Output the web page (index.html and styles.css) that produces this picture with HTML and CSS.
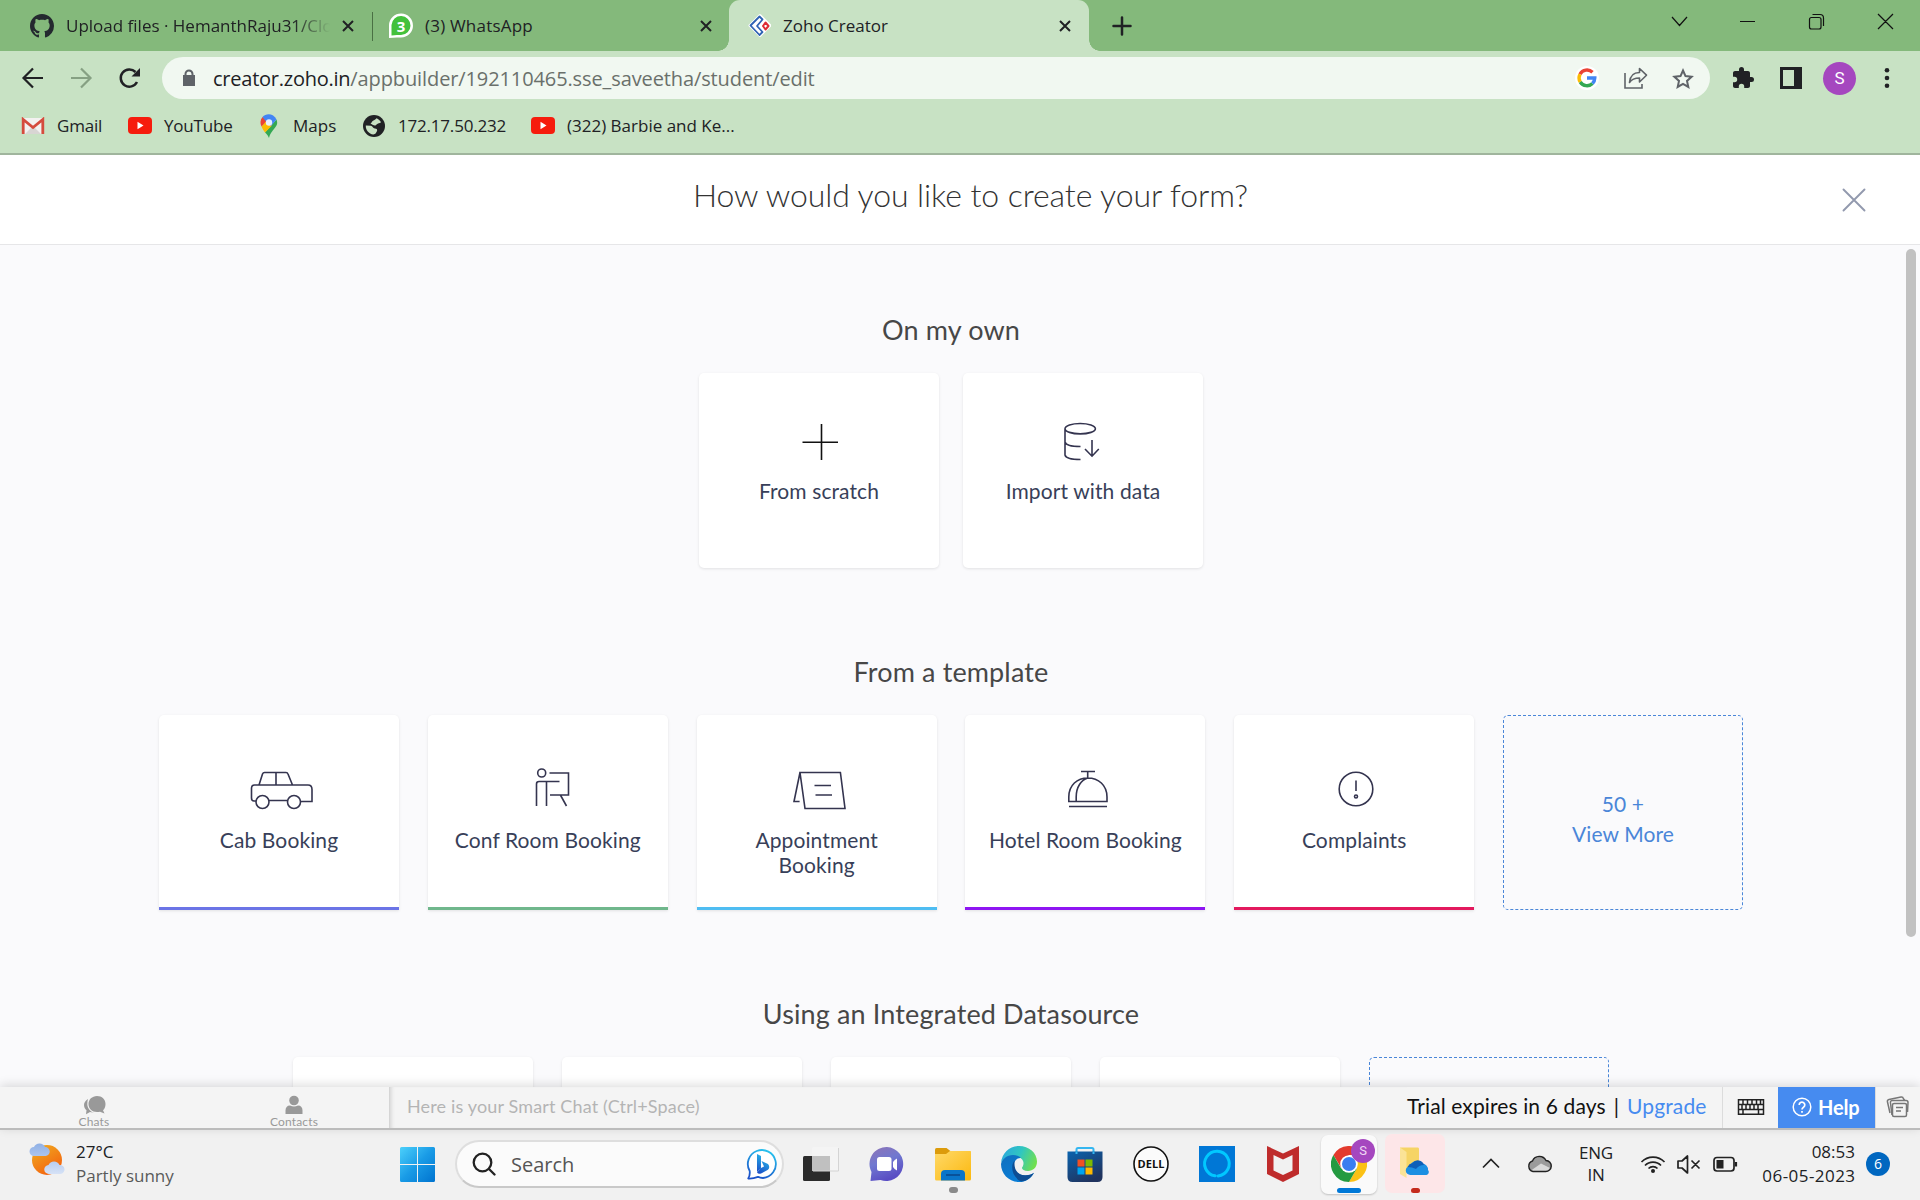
FILE: index.html
```html
<!DOCTYPE html>
<html lang="en">
<head>
<meta charset="utf-8">
<title>Zoho Creator</title>
<link rel="stylesheet" href="styles.css">
</head>
<body>
<div class="tabstrip">
  <div class="tab tab-first">
    <svg width="24" height="24" viewBox="0 0 16 16"><path fill="#24292f" d="M8 0C3.58 0 0 3.58 0 8c0 3.54 2.29 6.53 5.47 7.59.4.07.55-.17.55-.38 0-.19-.01-.82-.01-1.49-2.01.37-2.53-.49-2.69-.94-.09-.23-.48-.94-.82-1.13-.28-.15-.68-.52-.01-.53.63-.01 1.08.58 1.23.82.72 1.21 1.87.87 2.33.66.07-.52.28-.87.51-1.07-1.78-.2-3.64-.89-3.64-3.95 0-.87.31-1.59.82-2.15-.08-.2-.36-1.02.08-2.12 0 0 .67-.21 2.2.82.64-.18 1.32-.27 2-.27s1.36.09 2 .27c1.53-1.04 2.2-.82 2.2-.82.44 1.1.16 1.92.08 2.12.51.56.82 1.27.82 2.15 0 3.07-1.87 3.75-3.65 3.95.29.25.54.73.54 1.48 0 1.07-.01 1.93-.01 2.2 0 .21.15.46.55.38A8.01 8.01 0 0 0 16 8c0-4.42-3.58-8-8-8z"/></svg>
    <span class="tab-title fade"><span class="t">Upload files · HemanthRaju31/Clo</span></span>
    <svg class="x" width="12" height="12" viewBox="0 0 12 12"><path d="M1 1l10 10M11 1L1 11"/></svg>
  </div>
  <div class="tab tab-second">
    <svg width="26" height="26" viewBox="0 0 26 26"><path fill="#fff" d="M1 25V12a12 12 0 1 1 12 12.500H9z"/><path fill="#43c13c" d="M3.500 22.500V12A9.500 9.500 0 1 1 13 22H9z"/><text x="13" y="18.500" class="wa">3</text></svg>
    <span class="tab-title"><span class="t t-tab2">(3) WhatsApp</span></span>
    <svg class="x" width="12" height="12" viewBox="0 0 12 12"><path d="M1 1l10 10M11 1L1 11"/></svg>
  </div>
  <div class="tab tab-active">
    <svg width="24" height="26" viewBox="747 13 24 26"><path fill="#fff" stroke="#fff" stroke-width="3" stroke-linejoin="round" d="M760 15.500l10 10-10 10-10-10z"/><path fill="none" stroke="#2f62b4" stroke-width="1.800" stroke-linejoin="round" d="M759.500 16.500l3 3-5.500 6.500 5.500 6-3 3-9-9.500z"/><path fill="none" stroke="#dd2c34" stroke-width="2" stroke-linejoin="round" d="M765.500 22.500l3 3.500-3 3.500-2.500-3.500z"/></svg>
    <span class="tab-title"><span class="t">Zoho Creator</span></span>
    <svg class="x" width="12" height="12" viewBox="0 0 12 12"><path d="M1 1l10 10M11 1L1 11"/></svg>
  </div>
  <svg class="newtab" width="20" height="20" viewBox="0 0 20 20"><path d="M10 1.500v17M1.500 10h17"/></svg>
  <svg class="winctl" width="240" height="30" viewBox="1664 7 240 30"><path d="M1672 17l7.500 8.500 7.500-8.500M1740 21.500h15M1809.500 19.500a2 2 0 0 1 2-2h7.500a2 2 0 0 1 2 2v7.500a2 2 0 0 1-2 2h-7.500a2 2 0 0 1-2-2zM1812.500 14.500h7.500a3.500 3.500 0 0 1 3.500 3.500v8M1878 14l15 15M1893 14l-15 15"/></svg>
</div>

<div class="toolbar">
  <svg class="nav" width="140" height="30" viewBox="16 63 140 30"><g fill="none" stroke-width="2.200"><path stroke="#202124" d="M43 78H24.500M33 68.500L23.500 78l9.500 9.500"/><path stroke="#86a083" d="M71 78h18.500M81 68.500l9.500 9.500-9.500 9.500"/><path stroke="#202124" stroke-width="2.500" d="M137 82a8.600 8.600 0 1 1-1.500-10"/></g><path fill="#202124" d="M140 68v8.500h-8.500z"/></svg>
  <div class="omnibox">
    <svg width="14" height="18" viewBox="0 0 14 18"><path fill="#5f6368" d="M2.500 6V5a4.500 4.500 0 0 1 9 0v1H13v11H1V6zm2 0h5V5a2.500 2.500 0 0 0-5 0z"/></svg>
    <span class="url"><span class="t t-url1">creator.zoho.in</span><span class="t t-url2">/appbuilder/192110465.sse_saveetha/student/edit</span></span>
    <svg class="omni-icons" width="130" height="30" viewBox="1570 63 130 30">
      <circle cx="1587" cy="78" r="12" fill="#fff"/>
      <g fill="none" stroke-width="3.400"><path stroke="#ea4335" d="M1580 74.200a8 8 0 0 1 12.500-2"/><path stroke="#fbbc05" d="M1580.200 82a8 8 0 0 1-.2-7.800"/><path stroke="#34a853" d="M1592.500 83.500a8 8 0 0 1-12.300-1.500"/><path stroke="#4285f4" d="M1587 78h7.800a8 8 0 0 1-2.300 5.500"/></g>
      <g fill="none" stroke="#5f6368" stroke-width="1.600"><path d="M1625 73v15h17v-4"/><path stroke-linejoin="round" d="M1639.500 68.500l7 6.700-7 6.800v-4c-5 0-8 1.500-10 4.500.5-6 4-10 10-10z"/></g>
      <path fill="none" stroke="#5f6368" stroke-width="2" d="M1683 70.500l2.500 5.600 6.100.7-4.600 4.100 1.300 6-5.300-3.100-5.300 3.100 1.300-6-4.600-4.100 6.100-.7z"/>
    </svg>
  </div>
  <svg class="puzzle" width="24" height="24" viewBox="0 0 24 24"><path fill="#202124" d="M20.500 11H19V7c0-1.100-.9-2-2-2h-4V3.500a2.500 2.500 0 0 0-5 0V5H4c-1.100 0-2 .9-2 2v3.800h1.500a2.700 2.700 0 0 1 0 5.400H2V20c0 1.100.9 2 2 2h3.800v-1.500a2.700 2.700 0 0 1 5.400 0V22H17c1.100 0 2-.9 2-2v-4h1.500a2.500 2.500 0 0 0 0-5z"/></svg>
  <svg class="panel" width="22" height="22" viewBox="0 0 22 22"><path fill="#202124" fill-rule="evenodd" d="M0 0h22v22H0zM3 3v16h11V3z"/></svg>
  <span class="avatar">S</span>
  <svg class="dots" width="6" height="22" viewBox="0 0 6 22"><g fill="#202124"><circle cx="3" cy="3.200" r="2.300"/><circle cx="3" cy="11" r="2.300"/><circle cx="3" cy="18.700" r="2.300"/></g></svg>
</div>

<div class="bookmarks">
  <span class="bm bm1"><svg width="24" height="18" viewBox="0 0 24 18"><path fill="#f3f1f0" d="M1 1h22v16H1z"/><path fill="#d8d5d3" d="M4 17l8-8 8 8z"/><path fill="none" stroke="#d54b3d" stroke-width="2.800" d="M2.200 17V2.500L12 10.500l9.800-8V17"/></svg><span class="t t-bm">Gmail</span></span>
  <span class="bm bm2"><svg width="24" height="17" viewBox="0 0 24 17"><rect width="24" height="17" rx="4" fill="#f61c0d"/><path fill="#fff" d="M9.500 4.800v7.400l6-3.700z"/></svg><span class="t t-bm">YouTube</span></span>
  <span class="bm bm3"><svg width="18" height="24" viewBox="0 0 18 24"><path fill="#34a853" d="M9 24c1-4 2-5 5-9s4-5 2.500-9.500L5 18.500c2.500 2.500 3 3 4 5.500z"/><path fill="#fbbc04" d="M5 18.500C4 17 2.500 15 1.500 12.500L6 7l6 4.500z"/><path fill="#ea4335" d="M1.500 12.500C0 9.500 0 6 2.500 3L7 6.500z"/><path fill="#4285f4" d="M2.500 3C6-1 13.500-1 16.500 5.500L11 12 6 7.500z"/><circle cx="9" cy="8.500" r="3.200" fill="#e8f0fe"/></svg><span class="t">Maps</span></span>
  <span class="bm bm4"><svg width="22" height="22" viewBox="0 0 22 22"><circle cx="11" cy="11" r="11" fill="#202124"/><path fill="#c8e1c4" d="M13.500 3.200c2 .8 3.600 2.200 4.500 4-1.500 1.300-3 .8-4.500 2.300-.8 1.500-2.500 1-3.500.5L7.500 8.500C9 7.500 9 6 10.500 5.500s2-1.500 3-2.300zM2.800 10.500l5 .3c2 .5 2 2.500 4 2.700 2 .3 3 1 2 3-1 1.500-1 2.500-3.500 3C6 19 2.500 15 2.800 10.500z"/></svg><span class="t t-bm">172.17.50.232</span></span>
  <span class="bm bm5"><svg width="24" height="17" viewBox="0 0 24 17"><rect width="24" height="17" rx="4" fill="#f61c0d"/><path fill="#fff" d="M9.500 4.800v7.400l6-3.700z"/></svg><span class="t">(322) Barbie and Ke...</span></span>
</div>

<header class="dialog-head">
  <h1><span class="t t-h1">How would you like to create your form?</span></h1>
  <svg width="24" height="24" viewBox="0 0 24 24"><path fill="none" stroke="#9299ae" stroke-width="1.900" stroke-linecap="round" d="M1.500 1.500l21 21M22.500 1.500l-21 21"/></svg>
</header>

<main class="content">
  <div class="sections">
    <section>
      <h2>On my own</h2>
      <div class="cards own">
        <div class="card"><svg width="80" height="50" viewBox="779 417 80 50"><path stroke="#111" d="M821.500 424v36M802.500 442.300H838"/></svg><p>From scratch</p></div>
        <div class="card"><svg width="80" height="50" viewBox="1043 417 80 50"><path d="M1065 428.700a15.200 5.200 0 1 1 30.400 0a15.200 5.200 0 1 1-30.400 0V455q1 4.500 15.500 4.500M1065 442q1 4.500 15.500 4.500M1092 440v16M1085 449l7 7.200 6.800-7.200"/></svg><p>Import with data</p></div>
      </div>
    </section>
    <section>
      <h2>From a template</h2>
      <div class="cards">
        <div class="card line indigo"><svg width="80" height="50" viewBox="239 765 80 50"><path d="M259 785l3.500-11q.6-1.500 2-1.500h21.500q1.500 0 2 1.500l4.500 11M276 772.500V785M256 801h-2q-2.500 0-2.500-3v-9.500q0-3.500 3-3.500H308q4 0 4 4.500V801.500H300.500M269 800.500h18.500"/><circle cx="262.500" cy="802" r="6.500"/><circle cx="294" cy="802" r="6.500"/></svg><p>Cab Booking</p></div>
        <div class="card line green"><svg width="80" height="50" viewBox="508 765 80 50"><circle cx="541.700" cy="773" r="4"/><path d="M549.500 773h19v22H550M560.400 795l6.100 11M536.500 806v-22q0-2.500 2.500-2.500h20.500M546.500 781.500V806"/></svg><p>Conf Room Booking</p></div>
        <div class="card line sky"><svg width="80" height="50" viewBox="777 765 80 50"><path d="M800 772.500h40.400l4.600 36H805zl-6 29h5.600M814.500 785.500H831M815.500 795H832"/></svg><p>Appointment<br>Booking</p></div>
        <div class="card line purple"><svg width="80" height="50" viewBox="1045 765 80 50"><path d="M1081 771.500h14M1087.700 771.500v6.500M1068.800 801.500V797c0-12 8.500-19 19-19s19.200 7 19.200 19v4.500zM1076.200 801.500V797c0-10 5-17 11.500-19M1069 806.500h38"/></svg><p>Hotel Room Booking</p></div>
        <div class="card line red"><svg width="80" height="50" viewBox="1314 765 80 50"><circle cx="1356" cy="789" r="16.800"/><path d="M1356 780.500V791"/><circle cx="1356" cy="796.500" r="1.500"/></svg><p>Complaints</p></div>
        <div class="card more"><p>50 +<br>View More</p></div>
      </div>
    </section>
    <section>
      <h2>Using an Integrated Datasource</h2>
      <div class="cards">
        <div class="card"></div><div class="card"></div><div class="card"></div><div class="card"></div><div class="card more"></div>
      </div>
    </section>
  </div>
  <div class="scrollbar"></div>
</main>

<div class="chatbar">
  <div class="chat-tab chats"><svg width="24" height="20" viewBox="82 1095 24 20"><g fill="#999"><path d="M97 1096c5 0 8.500 3.500 8.500 8 0 3-1 5-2.500 6.300l1.500 3.200-4.500-1.700c-1 .3-2 .3-3 .3-5 0-8.500-3.500-8.500-8s3.500-8.100 8.500-8.100z"/><path d="M88 1099c-2.500 1.500-4 3.500-4 6 0 2 1 4 2.500 5.200l-.5 4 4-2.200 4 .8c-4-1.300-6.500-4.500-6.700-8.500 0-2 .2-3.800.7-5.300z"/></g></svg><span class="t">Chats</span></div>
  <div class="chat-tab contacts"><svg width="20" height="20" viewBox="284 1095 20 20"><g fill="#999"><circle cx="294" cy="1100.500" r="4.800"/><path d="M285.500 1114v-3.500c0-3 1.500-5 4.500-5q4 2 8 0c3 0 4.500 2 4.500 5v3.500z"/></g></svg><span class="t">Contacts</span></div>
  <div class="smart">Here is your Smart Chat (Ctrl+Space)</div>
  <div class="trial">Trial expires in 6 days<span class="bar">|</span><span class="upgrade">Upgrade</span></div>
  <div class="kbd"><svg width="28" height="18" viewBox="0 0 28 18"><path fill="none" stroke="#222" stroke-width="1.500" d="M1.500 1.800h25v14.500h-25zM1.500 6.500h25M1.500 11.500h25M6 2v4.500M10.500 2v4.500M15 2v4.500M19.500 2v4.500M23.500 2v4.500M5 6.500v5M9 6.500v5M13 6.500v5M17 6.500v5M21 6.500v5M6 11.500V16M21.500 11.500V16"/></svg></div>
  <div class="help"><svg width="20" height="20" viewBox="0 0 20 20"><circle cx="10" cy="10" r="8.800" fill="none" stroke="#fff" stroke-width="1.500"/><path fill="none" stroke="#fff" stroke-width="1.700" d="M7.200 8a2.800 2.800 0 1 1 4.300 2.300c-1 .7-1.500 1.200-1.500 2.200M10 14v1.800"/></svg><span class="t">Help</span></div>
  <div class="notes"><svg width="24" height="22" viewBox="0 0 24 22"><g fill="#f4f4f4" stroke="#777" stroke-width="1.500" stroke-linejoin="round"><path d="M4 17L1.500 6Q1 4 3 3.500L15 1q2-.3 2.300 1.500L19 5"/><path d="M6 19L4.500 7Q4 4.500 6.500 4.500H20q2 0 2 2L21.500 16"/><path d="M8 7.500h11q1.500 0 1.500 1.500v10q0 1.500-1.500 1.500H8Q6.500 20.500 6.500 19V9Q6.500 7.500 8 7.500zM10 11.500h7M10 15h5"/></g></svg></div>
</div>

<div class="taskbar">
  <div class="weather">
    <svg width="38" height="38" viewBox="28 1143 38 38"><defs><linearGradient id="sun" x1="0" y1="0" x2="0.600" y2="1"><stop offset="0" stop-color="#efb021"/><stop offset="1" stop-color="#f4630f"/></linearGradient><linearGradient id="cl" x1="0" y1="0" x2="0" y2="1"><stop offset="0" stop-color="#8fb0e6"/><stop offset="1" stop-color="#d6e2f6"/></linearGradient></defs><circle cx="47" cy="1163" r="15" fill="url(#sun)"/><path fill="url(#cl)" d="M34 1159a4.500 4.500 0 0 1 0-9 6 6 0 0 1 11 0 4.500 4.500 0 0 1 .5 9zM49 1177a4.500 4.500 0 0 1-.5-9 6 6 0 0 1 11 0 4.500 4.500 0 0 1 1 9z"/></svg>
    <div class="two"><span class="t">27°C</span><span class="t t-w2">Partly sunny</span></div>
  </div>
  <svg class="start" width="35" height="35" viewBox="0 0 35 35"><defs><linearGradient id="win" x1="0" y1="0" x2="1" y2="1"><stop offset="0" stop-color="#4cd0fb"/><stop offset="0.500" stop-color="#199be6"/><stop offset="1" stop-color="#0073cf"/></linearGradient></defs><path fill="url(#win)" d="M1.500 0H17v17H0V1.500Q0 0 1.500 0zM18 0h15.500Q35 0 35 1.500V17H18zM0 18h17v17H1.500Q0 35 0 33.500zM18 18h17v15.500q0 1.500-1.500 1.500H18z"/></svg>
  <div class="search">
    <svg width="24" height="24" viewBox="0 0 24 24"><g fill="none" stroke="#222" stroke-width="2.300" stroke-linecap="round"><circle cx="10.500" cy="10.500" r="8.800"/><path d="M17 17l5.500 5.500"/></g></svg>
    <span class="t t-se">Search</span>
    <svg width="32" height="32" viewBox="-1 0 32 32"><defs><linearGradient id="bing" x1="0.700" y1="0" x2="0.300" y2="1"><stop offset="0" stop-color="#27c3ee"/><stop offset="1" stop-color="#1b50c8"/></linearGradient></defs><path fill="#fff" stroke="url(#bing)" stroke-width="1.800" stroke-linejoin="round" d="M1.200 30.500q2-3 1.500-7.500A14 14 0 1 1 16 30q-3 0-5-1.200-5 2-9.800 1.700z"/><path fill="url(#bing)" d="M10 6l4 2v12l-4 4zM10 24.500l4-4.500 3-1.500-2.500-5.500 6.500 3q2.500 3 0 5.800L14 25.500q-2.500 1-4-1z"/></svg>
  </div>
  <div class="apps">
    <div class="app"><svg width="36" height="36" viewBox="0 0 36 36"><rect y="10" width="27" height="25" rx="1.500" fill="#2b2b2b"/><rect x="9" y="1" width="27" height="24" rx="1.500" fill="#f4f4f4"/><path fill="#c0c0c0" d="M9 10h18v15H9z"/><path fill="none" stroke="#d4d4d4" d="M35.500 2v23H10"/></svg></div>
    <div class="app"><svg width="36" height="36" viewBox="0 0 36 36"><defs><linearGradient id="tm" x1="0" y1="0" x2=".4" y2="1"><stop offset="0" stop-color="#8f74b5"/><stop offset=".5" stop-color="#7078d0"/><stop offset="1" stop-color="#5a4ec4"/></linearGradient></defs><path fill="url(#tm)" d="M18 1a17 17 0 1 1-6.500 33L1.500 35l1-9A17 17 0 0 1 18 1z"/><rect x="8" y="11" width="14.500" height="14" rx="2.500" fill="#fff"/><path fill="#fff" d="M24 16q1.500-2.500 4-3.500v12q-2.500-1-4-3.500z"/></svg></div>
    <div class="app"><svg width="36" height="36" viewBox="0 0 36 36"><defs><linearGradient id="fo" x1="0" y1="0" x2="1" y2="1"><stop offset="0" stop-color="#ffd968"/><stop offset="1" stop-color="#fbb80f"/></linearGradient></defs><path fill="#dc9b0b" d="M0 3.500Q0 2 1.500 2h10L16 5.500V9H0z"/><path fill="url(#fo)" d="M0 8h11l4-3h20.500q.5 0 .5 1v27q0 1.500-1.500 1.500h-33Q0 34.500 0 33z"/><path fill="#0a75c9" d="M6 34.500V28q0-4 4-4h16q4 0 4 4v6.500z"/><path stroke="#0a4688" stroke-width="1.500" d="M11 29h14"/></svg><i class="dot"></i></div>
    <div class="app"><svg width="36" height="36" viewBox="0 0 36 36"><defs><linearGradient id="e1" x1="0" y1=".3" x2="1" y2=".6"><stop offset="0" stop-color="#2aa9dd"/><stop offset=".5" stop-color="#30c6c0"/><stop offset="1" stop-color="#72e04c"/></linearGradient><linearGradient id="e2" x1="0" y1="0" x2=".6" y2="1"><stop offset="0" stop-color="#0f6fbe"/><stop offset="1" stop-color="#0a7fd8"/></linearGradient></defs><path fill="url(#e1)" d="M0 17C1 7 8.500 0 18 0c10 0 18 7 18 15.500 0 6-4 9.500-9 9.500-4 0-6-1.500-6-3 0-1 1.500-1.500 1.500-5 0-4-4.500-7-9.500-7C7 10 2 13 0 17z"/><path fill="url(#e2)" d="M0 18c1-5 6-9 12-9 3 0 6 1 8 3-4-.5-7 3-7 7 0 7 5.500 10.500 11.500 10.500 4 0 6.500-1.500 8.500-2.800C30 32.500 24.500 36 18 36 8 36 0 28 0 18z"/><path fill="#0d4d93" d="M13.500 14.500C9 20 11 31 20 35.500c6-.5 10-3.500 13-8.800-2 1.300-4.500 2.500-8.500 2.500C18 29.500 12.500 25 13.500 14.500z"/></svg></div>
    <div class="app"><svg width="36" height="36" viewBox="0 0 36 36"><defs><linearGradient id="st" x1="0" y1="0" x2=".6" y2="1"><stop offset="0" stop-color="#0a63ae"/><stop offset="1" stop-color="#20335e"/></linearGradient></defs><path fill="none" stroke="#35b6f0" stroke-width="2" d="M9.500 8V3.500Q9.500 2 11 2h14q1.500 0 1.500 1.500V8"/><path fill="url(#st)" d="M.5 5.500h35V31q0 5-5 5h-25q-5 0-5-5z"/><path fill="none" stroke="#35b6f0" stroke-width="2" d="M9.500 8V5.500M26.500 8V5.500"/><path fill="#f25022" d="M10.500 13.500h7v7h-7z"/><path fill="#7fba00" d="M18.500 13.500h7v7h-7z"/><path fill="#00a4ef" d="M10.500 21.500h7v7h-7z"/><path fill="#ffb900" d="M18.500 21.500h7v7h-7z"/></svg></div>
    <div class="app"><svg width="36" height="36" viewBox="0 0 36 36"><circle cx="18" cy="18" r="17" fill="#fbfbfb" stroke="#111" stroke-width="1.600"/><text x="18" y="22" class="dell" textLength="27">DELL</text></svg></div>
    <div class="app"><svg width="36" height="36" viewBox="0 0 36 36"><path fill="#0077d6" d="M0 0h36v36H0z"/><path fill="none" stroke="#00c8ff" stroke-width="3" stroke-linecap="round" d="M16 29.800a12.300 12.300 0 1 1 3 .1"/></svg></div>
    <div class="app"><svg width="36" height="36" viewBox="0 0 36 36"><path fill="#bf2c2c" fill-rule="evenodd" d="M2 0l16 7.500L34 0v28l-16 8L2 28zM8.500 9v15.500L18 29l9.500-4.500V9L18 13.500z"/></svg></div>
    <div class="app on"><svg width="36" height="36" viewBox="-18 -18 36 36"><path fill="#e33b2e" d="M-15.600-9A18 18 0 0 1 15.600-9H0L-7.500 4.500z"/><path fill="#fbc116" d="M15.600-9A18 18 0 0 1 0 18L7.800 4.500 7.500-9z"/><path fill="#249a41" d="M0 18A18 18 0 0 1-15.600-9l7.800 13.500L7.800 4.500z"/><circle r="8.800" fill="#fff"/><circle r="7" fill="#3a7df0"/></svg><b class="badge">S</b><i class="dot wide"></i></div>
    <div class="app pink"><svg width="34" height="40" viewBox="1401 1146 34 40"><path fill="#f6d465" d="M1403 1149.500h18q1 0 1 1.500V1174h-14z"/><path fill="#fbe396" d="M1403 1149.500l6.500 4.500v26l-6.500-4z"/><path fill="#1c8fe2" d="M1413.500 1177a4.500 4.500 0 0 1-.5-9 7 7 0 0 1 12-2.500 6 6 0 0 1 6 6.500 3 3 0 0 1-1.500 5z"/><path fill="#0e5fb8" d="M1410.500 1169a7 7 0 0 1 5-4 6.500 6.500 0 0 1 11.500 2q-5 0-8 4-4-2-8.500-2z"/></svg><i class="dot red"></i></div>
  </div>
  <svg class="tray1" width="80" height="30" viewBox="1475 1149 80 30"><path fill="none" stroke="#222" stroke-width="1.700" d="M1483 1167.500l8-8 8 8"/><path fill="#9b9b9b" d="M1533 1171.500a5.500 5.500 0 0 1-.3-10 7.500 7.500 0 0 1 13-1 5.500 5.500 0 0 1-.2 11z"/><path fill="#d9d9d9" d="M1531 1170.500l10-7 9 4.500q0 3-4 3.500h-13z"/><path fill="none" stroke="#222" stroke-width="1.500" d="M1533 1171.500a5.500 5.500 0 0 1-.5-10.500 7.500 7.500 0 0 1 13.500-.500 5.500 5.500 0 0 1-.5 11z"/></svg>
  <div class="lang"><span class="t">ENG</span><span class="t">IN</span></div>
  <svg class="tray2" width="104" height="30" viewBox="1637 1149 104 30"><g fill="none" stroke="#222" stroke-width="1.700"><path d="M1641.500 1162a16 16 0 0 1 23 0M1645 1165.500a11 11 0 0 1 16 0M1648.500 1168.500a6.500 6.500 0 0 1 9 0"/><path stroke-linejoin="round" d="M1678 1161h4l5.500-5v17l-5.500-5h-4zM1691.500 1160.500l8 8M1699.500 1160.500l-8 8"/><rect x="1714" y="1157.500" width="20" height="13.500" rx="3"/><path stroke-width="2.200" d="M1736 1162v4.500"/></g><circle cx="1653" cy="1171" r="2" fill="#222"/><rect x="1716.500" y="1160" width="7" height="8.500" fill="#222"/></svg>
  <div class="clock"><span class="t">08:53</span><span class="t t-date">06-05-2023</span></div>
  <span class="count">6</span>
</div>
</body>
</html>
```
FILE: styles.css
```css
* { box-sizing: border-box; }
body { margin: 0; width: 1920px; height: 1200px; overflow: hidden; display: flex; flex-direction: column; font-family: "Open Sans", "Noto Sans", sans-serif; color: #202124; }
svg { display: block; flex: none; }
p, h1, h2 { margin: 0; font-weight: 400; }
.t { white-space: nowrap; }

/* tab strip */
.tabstrip { height: 51px; flex: none; background: #84b97b; display: flex; align-items: center; font-size: 17px; }
.tab { display: flex; align-items: center; height: 51px; }
.tab-title { flex: 1; min-width: 0; white-space: nowrap; overflow: hidden; line-height: 30px; }
.tab .x { fill: none; stroke: #202124; stroke-width: 2; }
.tab-first { width: 372px; padding: 0 18px 0 30px; gap: 12px; position: relative; }
.tab-first::after { content: ""; position: absolute; right: -1px; top: 12px; width: 1.5px; height: 29px; background: #4a7044; }
.fade { -webkit-mask-image: linear-gradient(90deg, #000 86%, transparent 100%); mask-image: linear-gradient(90deg, #000 86%, transparent 100%); }
.tab-second { width: 357px; padding: 0 17px 0 16px; gap: 11px; }
.t-tab2 { letter-spacing: .2px; }
.tab-active { width: 360px; padding: 0 18px; gap: 12px; background: #c8e2c4; border-radius: 11px 11px 0 0; position: relative; }
.tab-active::before, .tab-active::after { content: ""; position: absolute; bottom: 0; width: 11px; height: 11px; }
.tab-active::before { left: -11px; background: radial-gradient(circle at 0 0, transparent 10.5px, #c8e2c4 11px); }
.tab-active::after { right: -11px; background: radial-gradient(circle at 100% 0, transparent 10.5px, #c8e2c4 11px); }
.newtab { margin-left: 23px; fill: none; stroke: #202124; stroke-width: 2.5; stroke-linecap: round; }
.winctl { margin-left: auto; margin-right: 16px; margin-bottom: 7px; fill: none; stroke: #111; stroke-width: 1.2; }
.wa { font: 700 15px "Open Sans", sans-serif; fill: #fff; text-anchor: middle; }

/* toolbar */
.toolbar { height: 54px; flex: none; background: #c8e2c4; display: flex; align-items: center; padding-left: 16px; }
.omnibox { width: 1548px; height: 42px; border-radius: 21px; background: #f1f8f1; margin-left: 6px; display: flex; align-items: center; padding: 0 10px 0 20px; }
.url { flex: 1; margin-left: 17px; padding-top: 2px; font-size: 20px; line-height: 30px; white-space: nowrap; }
.t-url1 { letter-spacing: -.24px; }
.t-url2 { color: #6a706b; letter-spacing: -.11px; }
.puzzle { margin-left: 21px; }
.panel { margin-left: 25px; }
.avatar { width: 33px; height: 33px; margin-left: 21px; border-radius: 50%; background: #a547bf; color: #fff; font: 17px/33px Roboto, sans-serif; text-align: center; }
.dots { margin-left: 28px; }

/* bookmarks */
.bookmarks { height: 50px; flex: none; background: #c8e2c4; border-bottom: 2px solid #a0b59d; display: flex; align-items: center; font-size: 17px; padding-bottom: 7px; }
.bm { display: flex; align-items: center; line-height: 30px; gap: 12px; white-space: nowrap; }
.bm1 { width: 107px; margin-left: 21px; }
.bm2 { width: 132px; }
.bm3 { width: 103px; gap: 15px; }
.bm4 { width: 168px; gap: 13px; }
.t-bm { letter-spacing: -.2px; }

/* dialog header */
.dialog-head { height: 90px; flex: none; background: #fff; border-bottom: 1px solid #e6e6e8; display: flex; align-items: center; padding-right: 54px; font-family: Lato, sans-serif; }
.dialog-head h1 { flex: 1; padding-left: 99px; padding-bottom: 10px; font-size: 32px; line-height: 40px; font-weight: 300; text-align: center; color: #333; }
.t-h1 { letter-spacing: -.08px; }

/* content */
.content { flex: 1; min-height: 0; background: #fafafc; display: flex; font-family: Lato, sans-serif; overflow: hidden; }
.sections { width: 1902px; padding-top: 65px; }
section { margin-bottom: 84px; }
h2 { font-size: 27px; line-height: 40px; text-align: center; color: #474747; margin-bottom: 23px; letter-spacing: .13px; }
.cards { display: flex; justify-content: center; gap: 28.8px; }
.cards.own { gap: 24px; }
.card { width: 240px; height: 195px; background: #fff; border-radius: 5px; box-shadow: 0 1px 3px rgba(0, 0, 0, .1); display: flex; flex-direction: column; align-items: center; padding-top: 44px; }
.card svg { fill: none; stroke: #34344f; stroke-width: 1.6; }
.card p { margin-top: 12px; font-size: 21px; line-height: 25px; color: #383f59; text-align: center; letter-spacing: .11px; }
.own .card p { margin-top: 11px; }
.line { padding-top: 50px; border-bottom: 3px solid; border-radius: 5px 5px 0 0; }
.indigo { border-color: #6b74e6; }
.green { border-color: #70b78c; }
.sky { border-color: #4fbdf2; }
.purple { border-color: #8e16f2; }
.red { border-color: #e3195e; }
.more { background: none; box-shadow: none; border: 1px dashed #4a86d8; padding-top: 61px; }
.more p { line-height: 30px; color: #4a86d8; }
.scrollbar { width: 10px; height: 688px; margin: 4px 0 0 4px; border-radius: 5px; background: #c1c1c1; }

/* chat bar */
.chatbar { height: 43px; flex: none; background: #f4f4f4; border-bottom: 2px solid #bcbcbc; box-shadow: 0 -2px 10px rgba(0, 0, 0, .14); position: relative; display: flex; font-family: Lato, sans-serif; }
.chat-tab { display: flex; flex-direction: column; align-items: center; padding-top: 8px; font-size: 12px; line-height: 13px; color: #999; letter-spacing: .15px; }
.chats { width: 188px; }
.contacts { width: 201px; padding-left: 11px; }
.smart { flex: 1; border-left: 1px solid #d5d5d5; box-shadow: inset 4px 0 4px -3px rgba(0, 0, 0, .15); padding-left: 17px; font-size: 18px; line-height: 39px; letter-spacing: .15px; color: #b4b4b4; }
.trial { width: 315px; font-size: 21px; line-height: 38px; letter-spacing: .12px; color: #111; white-space: nowrap; }
.bar { margin: 0 8px; }
.upgrade { color: #468bf0; }
.kbd { width: 56px; border-left: 1px solid #dcdcdc; display: flex; align-items: center; padding: 0 0 2px 14px; }
.help { width: 97px; background: #468bf0; color: #fff; font-weight: 700; font-size: 20px; display: flex; align-items: center; gap: 6px; padding: 0 0 2px 14px; letter-spacing: -.2px; }
.notes { width: 45px; display: flex; align-items: center; padding: 0 0 1px 10px; border-left: 1px solid #dcdcdc; }

/* taskbar */
.taskbar { height: 70px; flex: none; background: #f1f1f1; display: flex; align-items: center; font-size: 17px; padding-bottom: 2px; }
.weather { width: 400px; padding-left: 28px; display: flex; gap: 10px; }
.two, .clock, .lang { display: flex; flex-direction: column; line-height: 24px; }
.t-w2 { color: #5a5a5a; }
.search { width: 329px; height: 48px; margin-left: 20px; border: 2px solid #dedede; border-bottom-color: #c9c9c9; border-radius: 24px; background: #fbfbfb; display: flex; align-items: center; padding: 0 4px 0 15px; font-size: 20px; color: #555; }
.t-se { flex: 1; margin-left: 15px; }
.apps { display: flex; margin: 2px 0 0 4px; height: 70px; }
.app { width: 66px; display: flex; align-items: center; justify-content: center; position: relative; }
.on::before, .pink::before { content: ""; position: absolute; z-index: 0; left: 5px; top: 5px; width: 56px; height: 59px; border-radius: 7px; background: #fafafa; box-shadow: 0 1px 2px rgba(0, 0, 0, .2); }
.pink::before { left: 3px; top: 4px; width: 60px; background: #fde6e8; box-shadow: none; }
.app svg { position: relative; margin-bottom: 2px; }
.dot { position: absolute; left: 28.5px; top: 57px; width: 9px; height: 6px; border-radius: 3px; background: #8a8a8a; }
.wide { left: 21px; top: 58px; width: 24px; height: 5px; background: #0078d7; }
.red.dot { background: #c42b1c; top: 58px; height: 5px; }
.badge { position: absolute; left: 35px; top: 9px; width: 24px; height: 24px; border-radius: 50%; background: #a547bf; color: #f0d8f5; font: 13px/24px Roboto, sans-serif; text-align: center; }
.dell { font: 700 11px "Open Sans", sans-serif; fill: #111; text-anchor: middle; }
.tray1 { margin-left: 27px; }
.lang { width: 60px; margin-left: 11px; align-items: center; line-height: 22px; letter-spacing: -.2px; }
.tray2 { margin-left: 11px; }
.clock { width: 114px; align-items: flex-end; }
.t-date { letter-spacing: .45px; margin-right: -.5px; }
.count { width: 24px; height: 24px; margin-left: 11px; border-radius: 50%; background: #0067c0; color: #fff; font-size: 14px; line-height: 24px; text-align: center; }
```
